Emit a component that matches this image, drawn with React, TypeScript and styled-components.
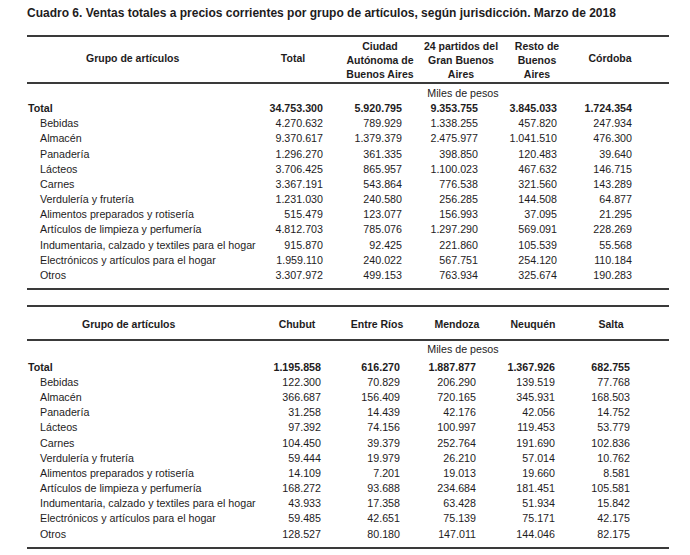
import React from "react";
import styled, { createGlobalStyle } from "styled-components";

const GlobalStyle = createGlobalStyle`
  html, body { margin: 0; padding: 0; background: #ffffff; }
  body {
    font-family: "Liberation Sans", Arial, Helvetica, sans-serif;
    color: #1e1c1d;
  }
`;

type Col = { head: string[]; w: number; pad: number };
type TableData = {
  labelW: number;
  headLabelPad: number;
  headH: number;
  headLift: number;
  milesPad: number;
  totalGap: number;
  cols: Col[];
  total: string[];
  rows: [string, ...string[]][];
};

const labels = [
  "Bebidas",
  "Almacén",
  "Panadería",
  "Lácteos",
  "Carnes",
  "Verdulería y frutería",
  "Alimentos preparados y rotisería",
  "Artículos de limpieza y perfumería",
  "Indumentaria, calzado y textiles para el hogar",
  "Electrónicos y artículos para el hogar",
  "Otros",
];

const t1Values = [
  ["4.270.632", "789.929", "1.338.255", "457.820", "247.934"],
  ["9.370.617", "1.379.379", "2.475.977", "1.041.510", "476.300"],
  ["1.296.270", "361.335", "398.850", "120.483", "39.640"],
  ["3.706.425", "865.957", "1.100.023", "467.632", "146.715"],
  ["3.367.191", "543.864", "776.538", "321.560", "143.289"],
  ["1.231.030", "240.580", "256.285", "144.508", "64.877"],
  ["515.479", "123.077", "156.993", "37.095", "21.295"],
  ["4.812.703", "785.076", "1.297.290", "569.091", "228.269"],
  ["915.870", "92.425", "221.860", "105.539", "55.568"],
  ["1.959.110", "240.022", "567.751", "254.120", "110.184"],
  ["3.307.972", "499.153", "763.934", "325.674", "190.283"],
];

const t2Values = [
  ["122.300", "70.829", "206.290", "139.519", "77.768"],
  ["366.687", "156.409", "720.165", "345.931", "168.503"],
  ["31.258", "14.439", "42.176", "42.056", "14.752"],
  ["97.392", "74.156", "100.997", "119.453", "53.779"],
  ["104.450", "39.379", "252.764", "191.690", "102.836"],
  ["59.444", "19.979", "26.210", "57.014", "10.762"],
  ["14.109", "7.201", "19.013", "19.660", "8.581"],
  ["168.272", "93.688", "234.684", "181.451", "105.581"],
  ["43.933", "17.358", "63.428", "51.934", "15.842"],
  ["59.485", "42.651", "75.139", "75.171", "42.175"],
  ["128.527", "80.180", "147.011", "144.046", "82.175"],
];

const table1: TableData = {
  labelW: 222,
  headLabelPad: 59,
  headH: 45,
  headLift: 4,
  milesPad: 8,
  totalGap: 0,
  cols: [
    { head: ["Total"], w: 88, pad: 14 },
    { head: ["Ciudad", "Autónoma de", "Buenos Aires"], w: 86, pad: 21 },
    { head: ["24 partidos del", "Gran Buenos", "Aires"], w: 76, pad: 21 },
    { head: ["Resto de", "Buenos", "Aires"], w: 76, pad: 18 },
    { head: ["Córdoba"], w: 70, pad: 13 },
  ],
  total: ["34.753.300", "5.920.795", "9.353.755", "3.845.033", "1.724.354"],
  rows: labels.map((l, i) => [l, ...t1Values[i]] as [string, ...string[]]),
};

const table2: TableData = {
  labelW: 230,
  headLabelPad: 55,
  headH: 32,
  headLift: 0,
  milesPad: 0,
  totalGap: 2.6,
  cols: [
    { head: ["Chubut"], w: 80, pad: 16 },
    { head: ["Entre Ríos"], w: 80, pad: 17 },
    { head: ["Mendoza"], w: 80, pad: 21 },
    { head: ["Neuquén"], w: 72, pad: 14 },
    { head: ["Salta"], w: 84, pad: 23 },
  ],
  total: ["1.195.858", "616.270", "1.887.877", "1.367.926", "682.755"],
  rows: labels.map((l, i) => [l, ...t2Values[i]] as [string, ...string[]]),
};

const Page = styled.div`
  padding: 5px 0 0 27px;
  width: 642px;
`;

const Title = styled.h1`
  margin: 0;
  font-size: 12px;
  line-height: 16px;
  font-weight: 700;
  color: #1e1c1d;
  white-space: nowrap;
`;

const TableBox = styled.section<{ $top: number }>`
  margin-top: ${(p) => p.$top}px;
  border-top: 2px solid #3a3a3a;
  border-bottom: 2px solid #3a3a3a;
`;

const Grid = styled.div<{ $cols: string }>`
  display: grid;
  grid-template-columns: ${(p) => p.$cols};
`;

const HeadRow = styled(Grid)<{ $h: number }>`
  height: ${(p) => p.$h - 1}px;
  padding-top: 1px;
  border-bottom: 2px solid #3a3a3a;
  align-items: center;
`;

const HeadLabel = styled.div<{ $pad: number; $lift: number }>`
  padding-left: ${(p) => p.$pad}px;
  padding-bottom: ${(p) => p.$lift}px;
  font-size: 10.5px;
  font-weight: 700;
  line-height: 14px;
  white-space: nowrap;
`;

const HeadCell = styled.div<{ $lift: number }>`
  padding-bottom: ${(p) => p.$lift}px;
  font-size: 10.5px;
  font-weight: 700;
  line-height: 14px;
  text-align: center;
  white-space: nowrap;
`;

const Body = styled(Grid)<{ $top: number; $bottom: number }>`
  padding-top: ${(p) => p.$top}px;
  padding-bottom: ${(p) => p.$bottom}px;
  font-size: 10.7px;
  line-height: 15.15px;
`;

const Miles = styled.div<{ $pad: number; $gap: number }>`
  grid-column: 2 / -1;
  text-align: center;
  padding-left: ${(p) => p.$pad}px;
  margin-bottom: ${(p) => p.$gap}px;
  white-space: nowrap;
`;

const LabelCell = styled.div<{ $strong?: boolean }>`
  grid-column: 1;
  padding-left: ${(p) => (p.$strong ? 1 : 13)}px;
  font-weight: ${(p) => (p.$strong ? 700 : 400)};
  white-space: nowrap;
`;

const NumCell = styled.div<{ $pad: number; $strong?: boolean }>`
  text-align: right;
  padding-right: ${(p) => p.$pad}px;
  font-weight: ${(p) => (p.$strong ? 700 : 400)};
  white-space: nowrap;
`;

const Filler = styled.div``;

function DataTable({
  data,
  top,
  bodyTop,
  bottom,
}: {
  data: TableData;
  top: number;
  bodyTop: number;
  bottom: number;
}) {
  const cols = `${data.labelW}px ${data.cols.map((c) => `${c.w}px`).join(" ")} 1fr`;
  return (
    <TableBox $top={top}>
      <HeadRow $cols={cols} $h={data.headH}>
        <HeadLabel $pad={data.headLabelPad} $lift={data.headLift}>
          Grupo de artículos
        </HeadLabel>
        {data.cols.map((c, i) => (
          <HeadCell key={i} $lift={c.head.length === 1 ? data.headLift : 0}>
            {c.head.map((line, j) => (
              <div key={j}>{line}</div>
            ))}
          </HeadCell>
        ))}
        <Filler />
      </HeadRow>
      <Body $cols={cols} $top={bodyTop} $bottom={bottom}>
        <Miles $pad={data.milesPad} $gap={data.totalGap}>
          Miles de pesos
        </Miles>
        <LabelCell $strong>Total</LabelCell>
        {data.total.map((v, i) => (
          <NumCell key={i} $pad={data.cols[i].pad} $strong>
            {v}
          </NumCell>
        ))}
        <Filler />
        {data.rows.map(([label, ...vals]) => (
          <React.Fragment key={label}>
            <LabelCell>{label}</LabelCell>
            {vals.map((v, i) => (
              <NumCell key={i} $pad={data.cols[i].pad}>
                {v}
              </NumCell>
            ))}
            <Filler />
          </React.Fragment>
        ))}
      </Body>
    </TableBox>
  );
}

export default function App() {
  return (
    <>
      <GlobalStyle />
      <Page>
        <Title>
          Cuadro 6. Ventas totales a precios corrientes por grupo de artículos, según jurisdicción. Marzo de 2018
        </Title>
        <DataTable data={table1} top={14} bodyTop={2} bottom={5} />
        <DataTable data={table2} top={15} bodyTop={1} bottom={5.4} />
      </Page>
    </>
  );
}
